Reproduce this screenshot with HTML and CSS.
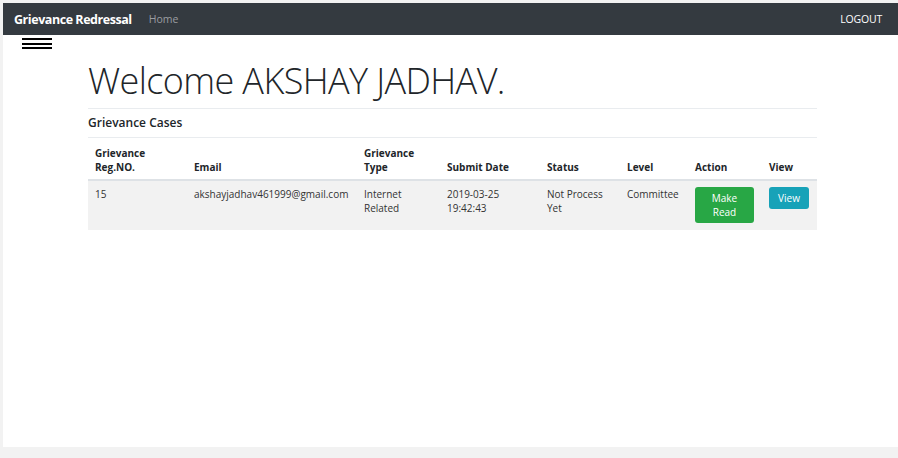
FILE: index.html
```html
<!DOCTYPE html>
<html>
<head>
<meta charset="utf-8">
<link rel="stylesheet" href="styles.css">
</head>
<body>
<div class="page">
  <nav class="navbar">
    <a class="brand">Grievance Redressal</a>
    <a class="nav-link">Home</a>
    <a class="logout">LOGOUT</a>
  </nav>
  <div class="hamburger"><span></span><span></span><span></span></div>
  <main class="container">
    <h1 class="welcome">Welcome AKSHAY JADHAV.</h1>
    <h2 class="section-title">Grievance Cases</h2>
    <table class="cases">
      <colgroup>
        <col class="c1"><col class="c2"><col class="c3"><col class="c4"><col class="c5"><col class="c6"><col class="c7"><col class="c8">
      </colgroup>
      <thead>
        <tr>
          <th>Grievance<br>Reg.NO.</th>
          <th>Email</th>
          <th>Grievance<br>Type</th>
          <th>Submit Date</th>
          <th>Status</th>
          <th>Level</th>
          <th>Action</th>
          <th>View</th>
        </tr>
      </thead>
      <tbody>
        <tr>
          <td>15</td>
          <td>akshayjadhav461999@gmail.com</td>
          <td>Internet<br>Related</td>
          <td>2019-03-25<br>19:42:43</td>
          <td>Not Process<br>Yet</td>
          <td>Committee</td>
          <td><button class="btn btn-green">Make<br>Read</button></td>
          <td><button class="btn btn-teal">View</button></td>
        </tr>
      </tbody>
    </table>
  </main>
</div>
</body>
</html>
```
FILE: styles.css
```css
html, body {
  margin: 0;
  padding: 0;
  background: #f2f2f2;
}
body {
  font-family: "Open Sans", "Noto Sans", sans-serif;
  color: #212529;
}
.page {
  margin: 3px 0 0 3px;
  height: 444px;
  background: #ffffff;
}
.navbar {
  height: 32px;
  background: #343a40;
  display: flex;
  align-items: center;
  padding: 0 16px 0 11px;
}
.brand {
  color: #ffffff;
  font-weight: 700;
  font-size: 12.5px;
  letter-spacing: -0.45px;
  margin-right: 17px;
}
.nav-link {
  color: #9a9da1;
  font-size: 10.5px;
}
.logout {
  margin-left: auto;
  color: #ffffff;
  font-size: 10.5px;
  letter-spacing: -0.2px;
}
.hamburger {
  margin: 3px 0 0 19px;
  width: 30px;
  display: flex;
  flex-direction: column;
  gap: 2.5px;
}
.hamburger span {
  display: block;
  height: 2px;
  background: #000;
}
.container {
  margin-left: 85px;
  width: 729px;
}
.welcome {
  margin: 10px 0 0 0;
  font-weight: 300;
  font-size: 36px;
  letter-spacing: -0.6px;
  line-height: 44px;
  color: #212529;
  padding-bottom: 5px;
  border-bottom: 1px solid #e9ecef;
}
.section-title {
  margin: 0;
  font-size: 12px;
  font-weight: 600;
  line-height: 28px;
  height: 28px;
  border-bottom: 1px solid #e9ecef;
}
.cases {
  width: 729px;
  table-layout: fixed;
  border-collapse: collapse;
  font-size: 10px;
  line-height: 14px;
}
.c1 { width: 99px; }
.c2 { width: 170px; }
.c3 { width: 83px; }
.c4 { width: 100px; }
.c5 { width: 80px; }
.c6 { width: 68px; }
.c7 { width: 74px; }
.c8 { width: 55px; }
.cases th {
  text-align: left;
  vertical-align: bottom;
  font-weight: 700;
  padding: 8px 7px 5px 7px;
  border-bottom: 2px solid #dee2e6;
}
.cases td {
  vertical-align: top;
  padding: 6px 7px 7px 7px;
  background: #f2f2f2;
  color: #333;
}
.btn {
  font-family: inherit;
  font-size: 10px;
  line-height: 14px;
  color: #fff;
  border: 1px solid transparent;
  border-radius: 3px;
  padding: 3px 8px;
  margin: 0;
  text-align: center;
}
.btn-green {
  background: #28a745;
  width: 59px;
  height: 36px;
}
.btn-teal {
  background: #17a2b8;
  width: 40px;
  height: 22px;
  padding: 3px 0;
}
```
